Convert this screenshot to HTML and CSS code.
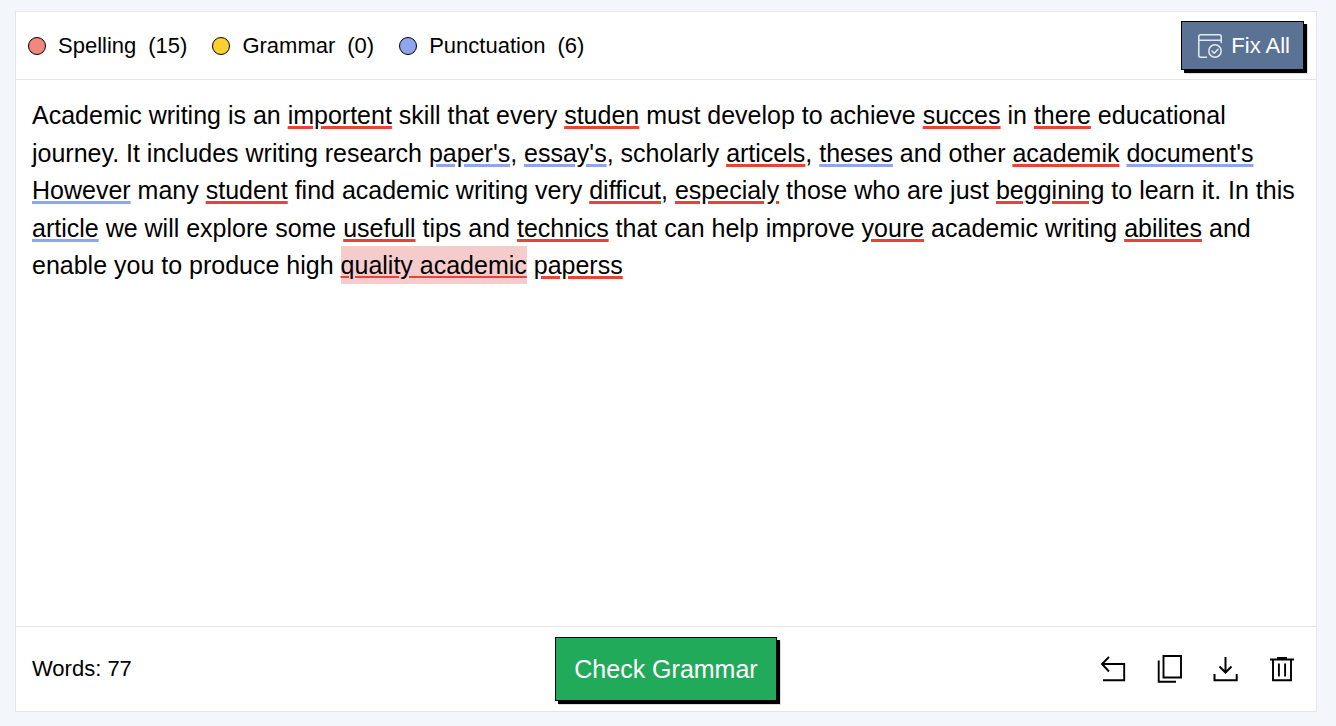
FILE: index.html
```html
<!DOCTYPE html>
<html lang="en">
<head>
    <meta charset="UTF-8">
    <meta name="viewport" content="width=device-width, initial-scale=1.0">
    <title>Grammar Checker</title>
    <link rel="stylesheet" href="styles.css">
</head>
<body>
    <main class="checker">
        <header class="toolbar">
            <ul class="legend">
                <li class="legend-item"><span class="dot dot-spelling"></span><span>Spelling</span><span>(15)</span></li>
                <li class="legend-item"><span class="dot dot-grammar"></span><span>Grammar</span><span>(0)</span></li>
                <li class="legend-item"><span class="dot dot-punctuation"></span><span>Punctuation</span><span>(6)</span></li>
            </ul>
            <button type="button" class="btn btn-fix">
                <svg class="fix-icon" viewBox="0 0 24 24" aria-hidden="true">
                    <path d="M8.500 23.200H2.500Q.800 23.200 .800 21.500V2.500Q.800.800 2.500.800H21.500Q23.200.800 23.200 2.500V8.500M.800 6.200H23.200"/>
                    <circle cx="17" cy="17" r="6.200"/>
                    <path d="M14 17l2.200 2.200 3.800-3.900"/>
                </svg>
                Fix All
            </button>
        </header>

        <div class="editor" contenteditable="true" role="textbox" aria-multiline="true" aria-label="Your text" spellcheck="false">
            <p>Academic writing is an <span class="spelling">importent</span> skill that every <span class="spelling">studen</span> must develop to achieve <span class="spelling">succes</span> in <span class="spelling">there</span> educational journey. It includes writing research <span class="punctuation">paper's</span>, <span class="punctuation">essay's</span>, scholarly <span class="spelling">articels</span>, <span class="punctuation">theses</span> and other <span class="spelling">academik</span> <span class="punctuation">document's</span> <span class="punctuation">However</span> many <span class="spelling">student</span> find academic writing very <span class="spelling">difficut</span>, <span class="spelling">especialy</span> those who are just <span class="spelling">beggining</span> to learn it. In this <span class="punctuation">article</span> we will explore some <span class="spelling">usefull</span> tips and <span class="spelling">technics</span> that can help improve <span class="spelling">youre</span> academic writing <span class="spelling">abilites</span> and enable you to produce high <span class="spelling active">quality academic</span> <span class="spelling">paperss</span></p>
        </div>

        <footer class="actions">
            <span class="words">Words: 77</span>
            <button type="button" class="btn btn-check">Check Grammar</button>
            <div class="tools">
                <button type="button" class="tool" aria-label="Undo">
                    <svg viewBox="0 0 28 28" stroke-width="1.9"><path d="M10 2L3 9L10 16.500M3 9H25.200V25.300H4"/></svg>
                </button>
                <button type="button" class="tool" aria-label="Copy">
                    <svg viewBox="0 0 28 28" stroke-width="1.9"><path d="M8.500 1H26V22.500H8.500ZM3.700 5.500V26.700H21"/></svg>
                </button>
                <button type="button" class="tool" aria-label="Download">
                    <svg viewBox="0 0 28 28" stroke-width="2"><path d="M14.500 2V18M8.500 11.500L14.500 17.500L20.500 11.500M3.500 19V25.300H25.700V19"/></svg>
                </button>
                <button type="button" class="tool" aria-label="Delete">
                    <svg viewBox="0 0 28 28" stroke-width="1.900"><path d="M3 4.500H27M10 3H20M6 4.500V25.300H24V4.500M11.900 8.500V21.500M18.100 8.500V21.500"/></svg>
                </button>
            </div>
        </footer>
    </main>
</body>
</html>
```
FILE: styles.css
```css
* {
    box-sizing: border-box;
    margin: 0;
    padding: 0;
}

body {
    display: flex;
    min-height: 100vh;
    padding: 11px 19px 14px 15px;
    background: #f3f6fb;
    color: #000;
    font-family: "Liberation Sans", Arial, sans-serif;
    font-size: 22px;
}

.checker {
    flex: 1;
    display: flex;
    flex-direction: column;
    background: #fff;
    border: 1px solid #e3e5e8;
}

/* top bar */
.toolbar {
    display: flex;
    align-items: center;
    justify-content: space-between;
    padding: 9px 12px;
    border-bottom: 1px solid #e3e5e8;
}

.legend {
    display: flex;
    gap: 25px;
    list-style: none;
}

.legend-item {
    display: flex;
    align-items: center;
    gap: 12px;
}

.dot {
    width: 18px;
    height: 18px;
    border: 1px solid #000;
    border-radius: 50%;
}

.dot-spelling {
    background: #f28780;
}

.dot-grammar {
    background: #ffcf2d;
}

.dot-punctuation {
    background: #8fa6ee;
}

.btn {
    border: 1px solid #000;
    box-shadow: 3px 3px 0 #000, 4px 4px 0 #ddd;
    color: #fff;
    font-family: inherit;
    cursor: pointer;
}

.btn-fix {
    display: flex;
    align-items: center;
    gap: 9px;
    height: 49px;
    padding: 0 13px 0 16px;
    background: #5a7394;
    font-size: 22px;
}

.fix-icon {
    width: 24px;
    height: 24px;
    fill: none;
    stroke: #e6eaf0;
    stroke-width: 1.5;
    stroke-linecap: round;
    stroke-linejoin: round;
}

/* text area */
.editor {
    flex: 1;
    padding: 17px 16px;
    font-size: 25px;
    line-height: 1.5;
    outline: none;
}

.spelling,
.punctuation {
    text-decoration: underline 3px #ea4335;
    text-underline-offset: 2px;
}

.punctuation {
    text-decoration-color: #8fa6ee;
}

.active {
    padding: 5px 0;
    background: #f5cccb;
    text-decoration-thickness: 2px;
}

/* bottom bar */
.actions {
    display: grid;
    grid-template-columns: 1fr auto 1fr;
    align-items: center;
    padding: 10px 16px;
    border-top: 1px solid #e3e5e8;
}

.btn-check {
    height: 64px;
    padding: 0 18px;
    background: #22aa5b;
    font-size: 25px;
}

.tools {
    display: flex;
    justify-content: flex-end;
    gap: 28px;
    padding-right: 5px;
}

.tool {
    width: 28px;
    height: 28px;
    background: none;
    border: 0;
    cursor: pointer;
}

.tool svg {
    display: block;
    width: 28px;
    height: 28px;
    fill: none;
    stroke: #000;
}
```
